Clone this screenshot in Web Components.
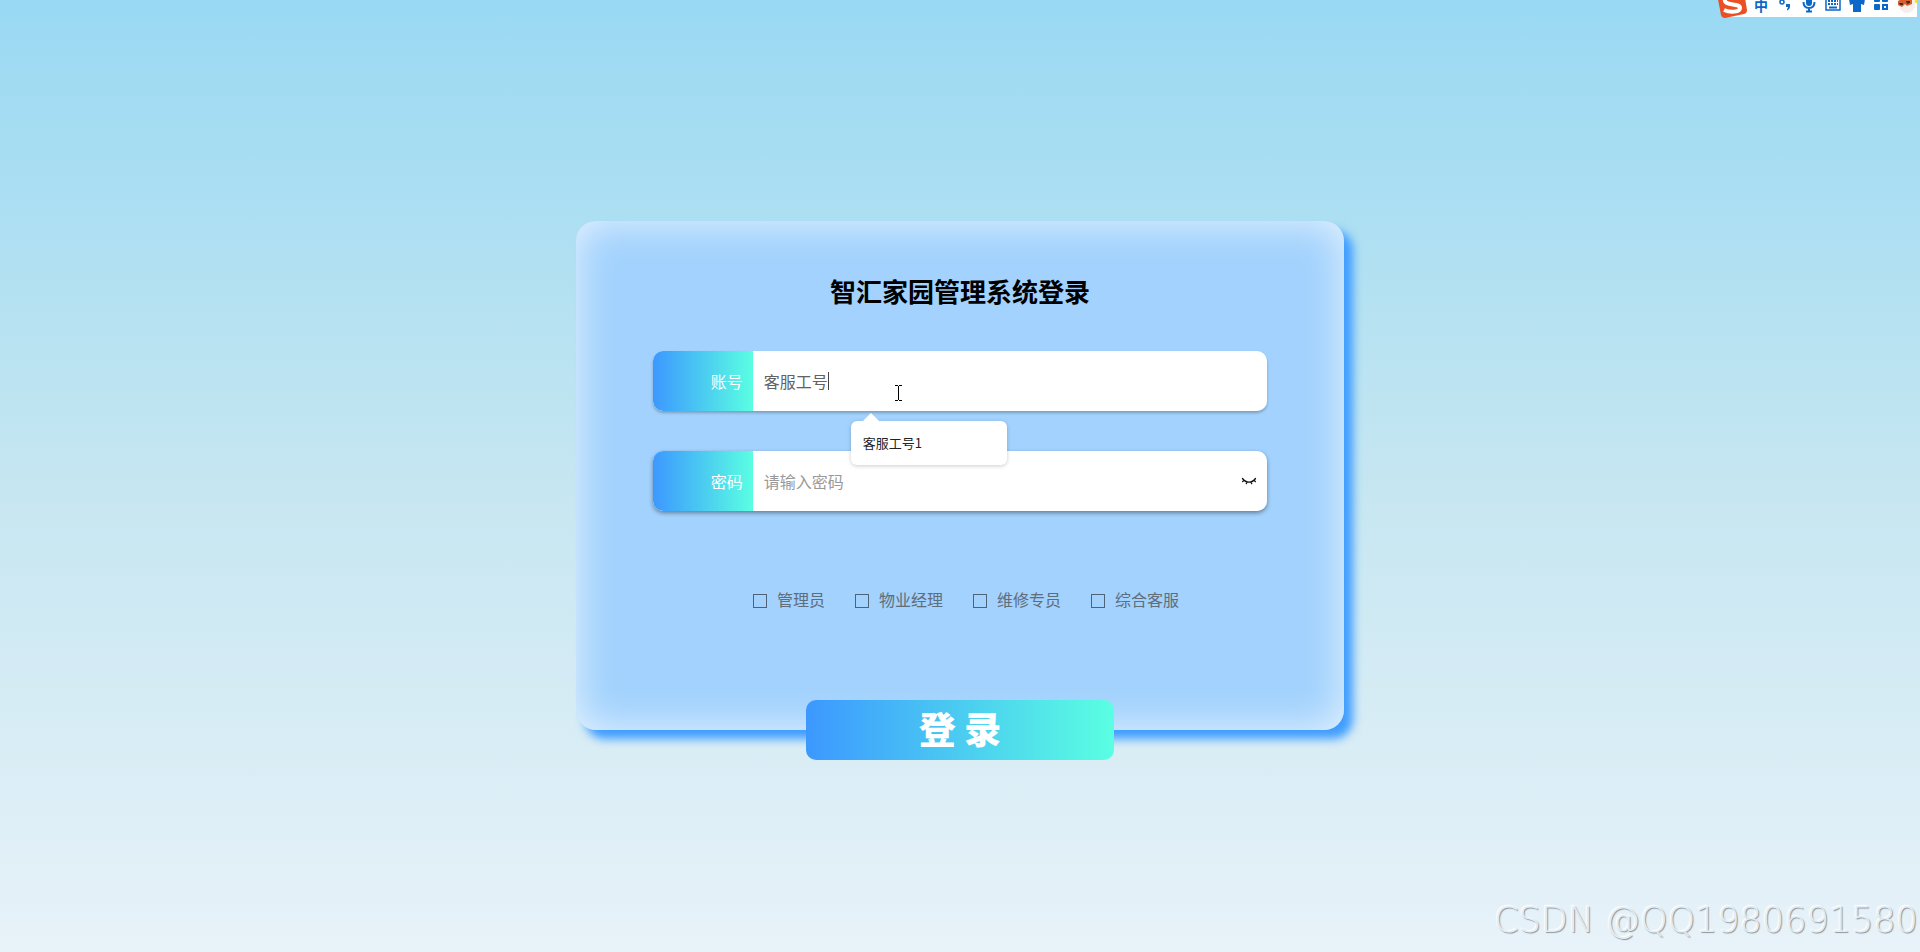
<!DOCTYPE html>
<html lang="zh-CN">
<head>
<meta charset="utf-8">
<title>智汇家园管理系统登录</title>
<style>
body { margin: 0; font-family: "Noto Sans CJK SC", "Noto Sans", sans-serif; }
</style>
</head>
<body>
<login-page>
  <login-card heading="智汇家园管理系统登录">
    <login-field label="账号" value="客服工号" type="text" name="account">
      <suggest-list slot="overlay">客服工号1</suggest-list>
      <text-pointer slot="overlay"></text-pointer>
    </login-field>
    <login-field label="密码" placeholder="请输入密码" type="password" name="password" toggle></login-field>
    <role-check slot="roles">管理员</role-check>
    <role-check slot="roles">物业经理</role-check>
    <role-check slot="roles">维修专员</role-check>
    <role-check slot="roles">综合客服</role-check>
  </login-card>
  <ime-bar slot="overlay"></ime-bar>
  <page-mark slot="overlay">CSDN @QQ1980691580</page-mark>
</login-page>

<script>
class Base extends HTMLElement {
  connectedCallback() {
    if (this.shadowRoot) return;
    this.attachShadow({ mode: 'open' }).innerHTML = this.view();
  }
  attr(name) { return this.getAttribute(name) || ''; }
}

customElements.define('login-page', class extends Base {
  view() { return `<style>
    :host { display: grid; position: relative; box-sizing: border-box; min-height: 100vh; padding-bottom: 1px;
      place-items: center; overflow: hidden;
      background: linear-gradient(#99d9f3, #c5e6f1 50%, #e8f2f9); }
    main { width: 40%; }
  </style><main><slot></slot></main><slot name="overlay"></slot>`; }
});

customElements.define('login-card', class extends Base {
  view() { return `<style>
    :host { display: block; }
    form { display: flex; flex-direction: column; align-items: center; padding-top: 50px; border-radius: 20px;
      background: #a2d2fd;
      box-shadow: 9px 9px 10px #409eff, inset 0 0 40px rgba(255,255,255,.76); }
    h1 { margin: 0 0 40px; font-size: 26px; line-height: 40px; font-weight: 700; color: #000; }
    .fields { display: flex; flex-direction: column; gap: 40px; width: 80%; }
    .roles { display: flex; gap: 30px; margin: 75px 0 84px; padding-left: 12px; }
    button { width: 40%; height: 60px; margin-bottom: -30px; padding: 0 0 4px; border: 0; border-radius: 10px;
      background: linear-gradient(90deg, #3c98ff, #5affe2); color: #fff; font: 900 37px/56px "Noto Sans CJK SC", sans-serif; }
  </style>
  <form>
    <h1>${this.attr('heading')}</h1>
    <div class="fields"><slot></slot></div>
    <div class="roles"><slot name="roles"></slot></div>
    <button type="button">登 录</button>
  </form>`; }
});

customElements.define('login-field', class extends Base {
  view() { return `<style>
    :host { display: block; position: relative; border-radius: 10px; box-shadow: 0 2px 4px rgba(0,0,0,.4); }
    :host([value]) { z-index: 1; box-shadow: 0 2px 3px rgba(0,0,0,.25); }
    .row { display: flex; height: 60px; border-radius: 10px; overflow: hidden; background: #fff; }
    label { box-sizing: border-box; width: 100px; padding-right: 10px; text-align: right; color: #fff;
      font-size: 16px; line-height: 60px; background: linear-gradient(90deg, #3c98ff, #5affe2); }
    input { flex: 1; min-width: 0; border: 0; outline: 0; padding: 0 11px; background: none; color: #606266;
      font: 16px "Noto Sans CJK SC", sans-serif; }
    input::placeholder { color: #999; opacity: 1; }
    :host([value]) input { background: linear-gradient(#444, #444) 75px center / 1px 18px no-repeat; }
    button { width: 36px; padding: 0; border: 0; background: none; display: grid; place-items: center; }
  </style>
  <div class="row">
    <label for="box">${this.attr('label')}</label>
    <input id="box" type="${this.attr('type')}" name="${this.attr('name')}" value="${this.attr('value')}" placeholder="${this.attr('placeholder')}">
    ${this.hasAttribute('toggle') ? `<button type="button" aria-label="显示密码"><svg width="16" height="16" viewBox="0 0 16 16" fill="none" stroke="#111" stroke-width="1.3" stroke-linecap="round">
      <path d="M1.500 5.500C3.500 8.200 5.700 9.200 8 9.200s4.500-1 6.500-3.700M3 7.200 1.600 8.600M5.900 8.800 5.300 10.700M10.100 8.800 10.700 10.700M13 7.200 14.400 8.600"/></svg></button>` : ''}
  </div><slot name="overlay"></slot>`; }
});

customElements.define('suggest-list', class extends Base {
  view() { return `<style>
    :host { position: absolute; top: 70px; left: 198px; box-sizing: border-box; width: 156px; height: 44px; padding: 0 12px;
      border-radius: 6px; background: #fff; box-shadow: 0 1px 4px rgba(0,0,0,.2);
      color: #222; font-size: 13px; line-height: 44px; }
    svg { position: absolute; left: 12px; bottom: 100%; }
  </style><svg width="16" height="8" viewBox="0 0 16 8"><path d="M0 8 8 0l8 8z" fill="#fff"/></svg><slot></slot>`; }
});

customElements.define('text-pointer', class extends Base {
  view() { return `<style>
    :host { position: absolute; left: 242px; top: 34px; display: block; height: 16px; pointer-events: none; }
    svg { display: block; }
  </style><svg width="8" height="16" viewBox="0 0 8 16" fill="#000" shape-rendering="crispEdges"><path d="M0 0h3v1H0zM4 0h3v1H4zM3 1h1v14H3zM0 15h3v1H0zM4 15h3v1H4z"/></svg>`; }
});

customElements.define('role-check', class extends Base {
  view() { return `<style>
    :host { display: block; }
    label { display: flex; align-items: center; gap: 10px; height: 30px; font-size: 16px; color: #606d7b; }
    span { line-height: 24px; padding-bottom: 4px; }
    input { appearance: none; box-sizing: border-box; width: 14px; height: 14px; margin: 0; border: 1px solid #4e6377; }
  </style><label><input type="checkbox"><span>${this.textContent}</span></label>`; }
});

customElements.define('ime-bar', class extends Base {
  view() { return `<style>
    :host { position: absolute; top: 0; right: 3px; display: block; height: 18px; color: #0b67c8; }
    .bar { display: flex; height: 28px; margin-top: -11px; }
    .tray { display: flex; align-items: center; gap: 8px; height: 28px; margin-left: -18px; padding-left: 24px; background: #fff; }
    span { width: 16px; font-size: 14px; line-height: 12px; font-weight: 700; text-align: center; padding-top: 4px; }
    svg { display: block; flex: none; }
    .logo { position: relative; z-index: 1; }
  </style>
  <div class="bar">
    <svg class="logo" width="30" height="29" viewBox="0 0 30 29"><path d="M0 5 25 1q2 0 2 2l3 18q0 3-3 4L8 29q-3 0-4-3z" fill="#eb4f24"/><path d="M23 6C14 4 7 7 8 12c1 5 15 2 15 7 0 4-9 5-16 2" fill="none" stroke="#fff" stroke-width="4"/></svg>
    <section class="tray">
      <span>中</span>
      <svg width="16" height="16" viewBox="0 0 16 16" fill="currentColor"><circle cx="5" cy="7" r="2" fill="none" stroke="currentColor" stroke-width="1.500"/><path d="M9 9h4v3q0 2-3 3.500v-1.500q1-1 1-2H9z"/></svg>
      <svg width="16" height="20" viewBox="0 0 16 20"><rect x="5" y="1" width="6" height="12" rx="3" fill="currentColor"/><path d="M2.500 9q0 6 5.500 6t5.500-6M8 15v4M5 18.500h6" fill="none" stroke="currentColor" stroke-width="2"/></svg>
      <svg width="16" height="18" viewBox="0 0 16 18"><path d="M1 2h14v14H1z" fill="#fff" stroke="currentColor" stroke-width="1.500"/><path d="M3 7h10M3 10h10" stroke="currentColor" stroke-width="2" stroke-dasharray="2 1"/><path d="M4 13.500h8" stroke="currentColor" stroke-width="2"/></svg>
      <svg width="16" height="18" viewBox="0 0 16 18" fill="currentColor"><path d="M0 5 5 1q3 3 6 0l5 4-1 6-3-1v8H4v-8l-3 1z"/></svg>
      <svg width="16" height="18" viewBox="0 0 16 18" fill="currentColor"><rect x="1" y="2" width="6" height="6" rx="1"/><rect x="9" y="2" width="6" height="6" rx="1"/><rect x="1" y="10" width="6" height="6" rx="1"/><rect x="10" y="11" width="4" height="4" fill="none" stroke="currentColor" stroke-width="2"/></svg>
      <svg width="20" height="22" viewBox="0 0 20 22"><circle cx="10" cy="13" r="8" fill="#f6efe9"/><path d="M16 2h4v9h-2z" fill="#ffd64a"/><path d="M1 9q6-4 14-1v4l-5 2-2-2-3 3-4-2z" fill="#d9602c"/><path d="M2 11h4v2H3zM9 9h4v2l-3 1z" fill="#4b2a22"/></svg>
    </section>
  </div>`; }
});

customElements.define('page-mark', class extends Base {
  view() { return `<style>
    :host { position: absolute; right: 2px; bottom: 8px; font: 200 35px/48px "DejaVu Sans", sans-serif;
      color: #e3edf3; text-shadow: 1px 1px 1px #8d959b, -1px -1px 1px #fff; white-space: nowrap; }
  </style><slot></slot>`; }
});
</script>
</body>
</html>
